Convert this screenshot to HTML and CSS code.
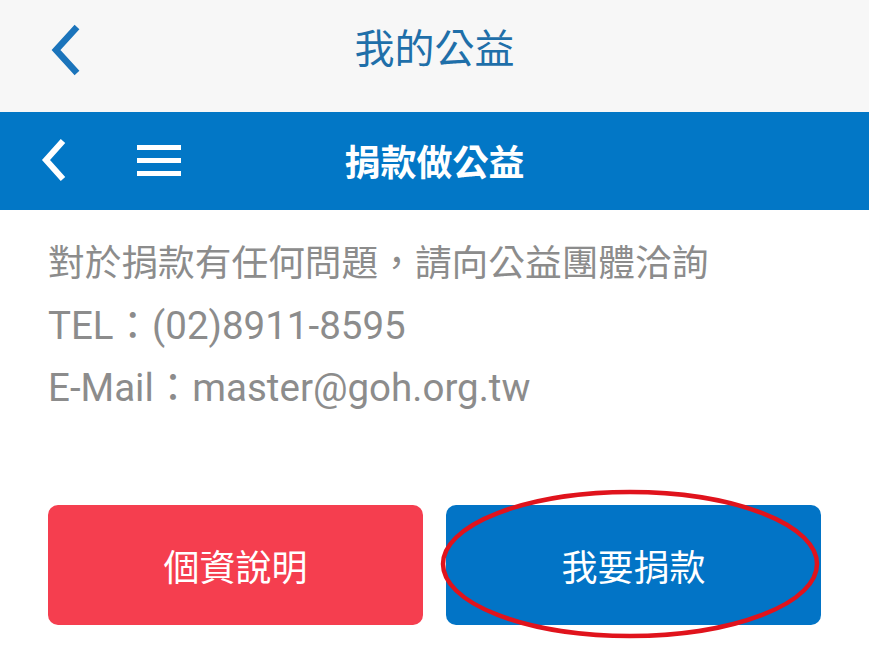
FILE: index.html
```html
<!DOCTYPE html>
<html lang="zh-Hant">
<head>
  <meta charset="UTF-8" />
  <meta name="viewport" content="width=device-width, initial-scale=1.0"/>
  <title>我的公益</title>
  <link rel="stylesheet" href="styles.css">
</head>
<body>
  <header class="app-bar">
    <button class="app-back" aria-label="返回">
      <svg width="34" height="54" viewBox="0 0 34 54"><path d="M29 4 L8 27 L29 50" fill="none" stroke="#1b74bb" stroke-width="6.5"/></svg>
    </button>
    <h1 class="app-title">我的公益</h1>
  </header>

  <nav class="page-bar">
    <button class="page-back" aria-label="返回">
      <svg width="28" height="44" viewBox="0 0 28 44"><path d="M23 3 L6 22 L23 41" fill="none" stroke="#fff" stroke-width="6"/></svg>
    </button>
    <button class="menu" aria-label="選單">
      <span></span><span></span><span></span>
    </button>
    <h2 class="page-title">捐款做公益</h2>
  </nav>

  <main>
    <div class="info">
      <p>對於捐款有任何問題，請向公益團體洽詢</p>
      <p class="latin">TEL：(02)8911-8595</p>
      <p class="latin">E-Mail：master@goh.org.tw</p>
    </div>

    <div class="actions">
      <a class="btn btn-red" href="#">個資說明</a>
      <a class="btn btn-blue" href="#">我要捐款</a>
      <svg class="circle" width="384" height="152" viewBox="0 0 384 152"><ellipse cx="190" cy="76" rx="187" ry="72" fill="none" stroke="#e0131c" stroke-width="4.5"/></svg>
    </div>
  </main>
</body>
</html>
```

FILE: styles.css
```css
* {
  box-sizing: border-box;
}

html, body {
  margin: 0;
  background: #fff;
  font-family: Roboto, "Noto Sans CJK TC", sans-serif;
}

body {
  min-height: 100vh;
}

button {
  background: none;
  border: 0;
  padding: 0;
  cursor: pointer;
}

.app-bar {
  height: 112px;
  background: #f7f7f7;
  display: flex;
  align-items: center;
  position: relative;
}

.app-back {
  display: flex;
  margin: 0 0 12px 48px;
}

.app-title {
  position: absolute;
  left: 0;
  right: 0;
  top: 22px;
  margin: 0;
  text-align: center;
  font-size: 40px;
  font-weight: 400;
  line-height: 56px;
  color: #1f6fa9;
  pointer-events: none;
}

.page-bar {
  height: 98px;
  background: #0277c6;
  display: flex;
  align-items: center;
  position: relative;
}

.page-back {
  display: flex;
  margin: 0 0 2px 40px;
}

.menu {
  display: flex;
  flex-direction: column;
  gap: 8px;
  margin: 0 0 2px 69px;
}

.menu span {
  display: block;
  width: 44px;
  height: 5px;
  background: #fff;
}

.page-title {
  position: absolute;
  left: 0;
  right: 0;
  top: 27px;
  margin: 0;
  text-align: center;
  font-size: 36px;
  font-weight: 700;
  line-height: 50px;
  color: #fff;
  pointer-events: none;
}

main {
  padding: 23px 48px 0;
}

.info p {
  margin: 0;
  font-size: 36.7px;
  line-height: 62px;
  color: #8c8c8c;
}

.info .latin {
  font-size: 38.5px;
}

.actions {
  position: relative;
  display: grid;
  grid-template-columns: 375px 375px;
  gap: 23px;
  margin-top: 86px;
}

.btn {
  height: 120px;
  border-radius: 10px;
  display: flex;
  align-items: center;
  justify-content: center;
  font-size: 36px;
  color: #fff;
  text-decoration: none;
}

.btn-red {
  background: #f53e4f;
}

.btn-blue {
  background: #0274c6;
}

/* hand-drawn highlight around the donate button */
.circle {
  position: absolute;
  left: 392px;
  top: -17px;
  pointer-events: none;
}
```
